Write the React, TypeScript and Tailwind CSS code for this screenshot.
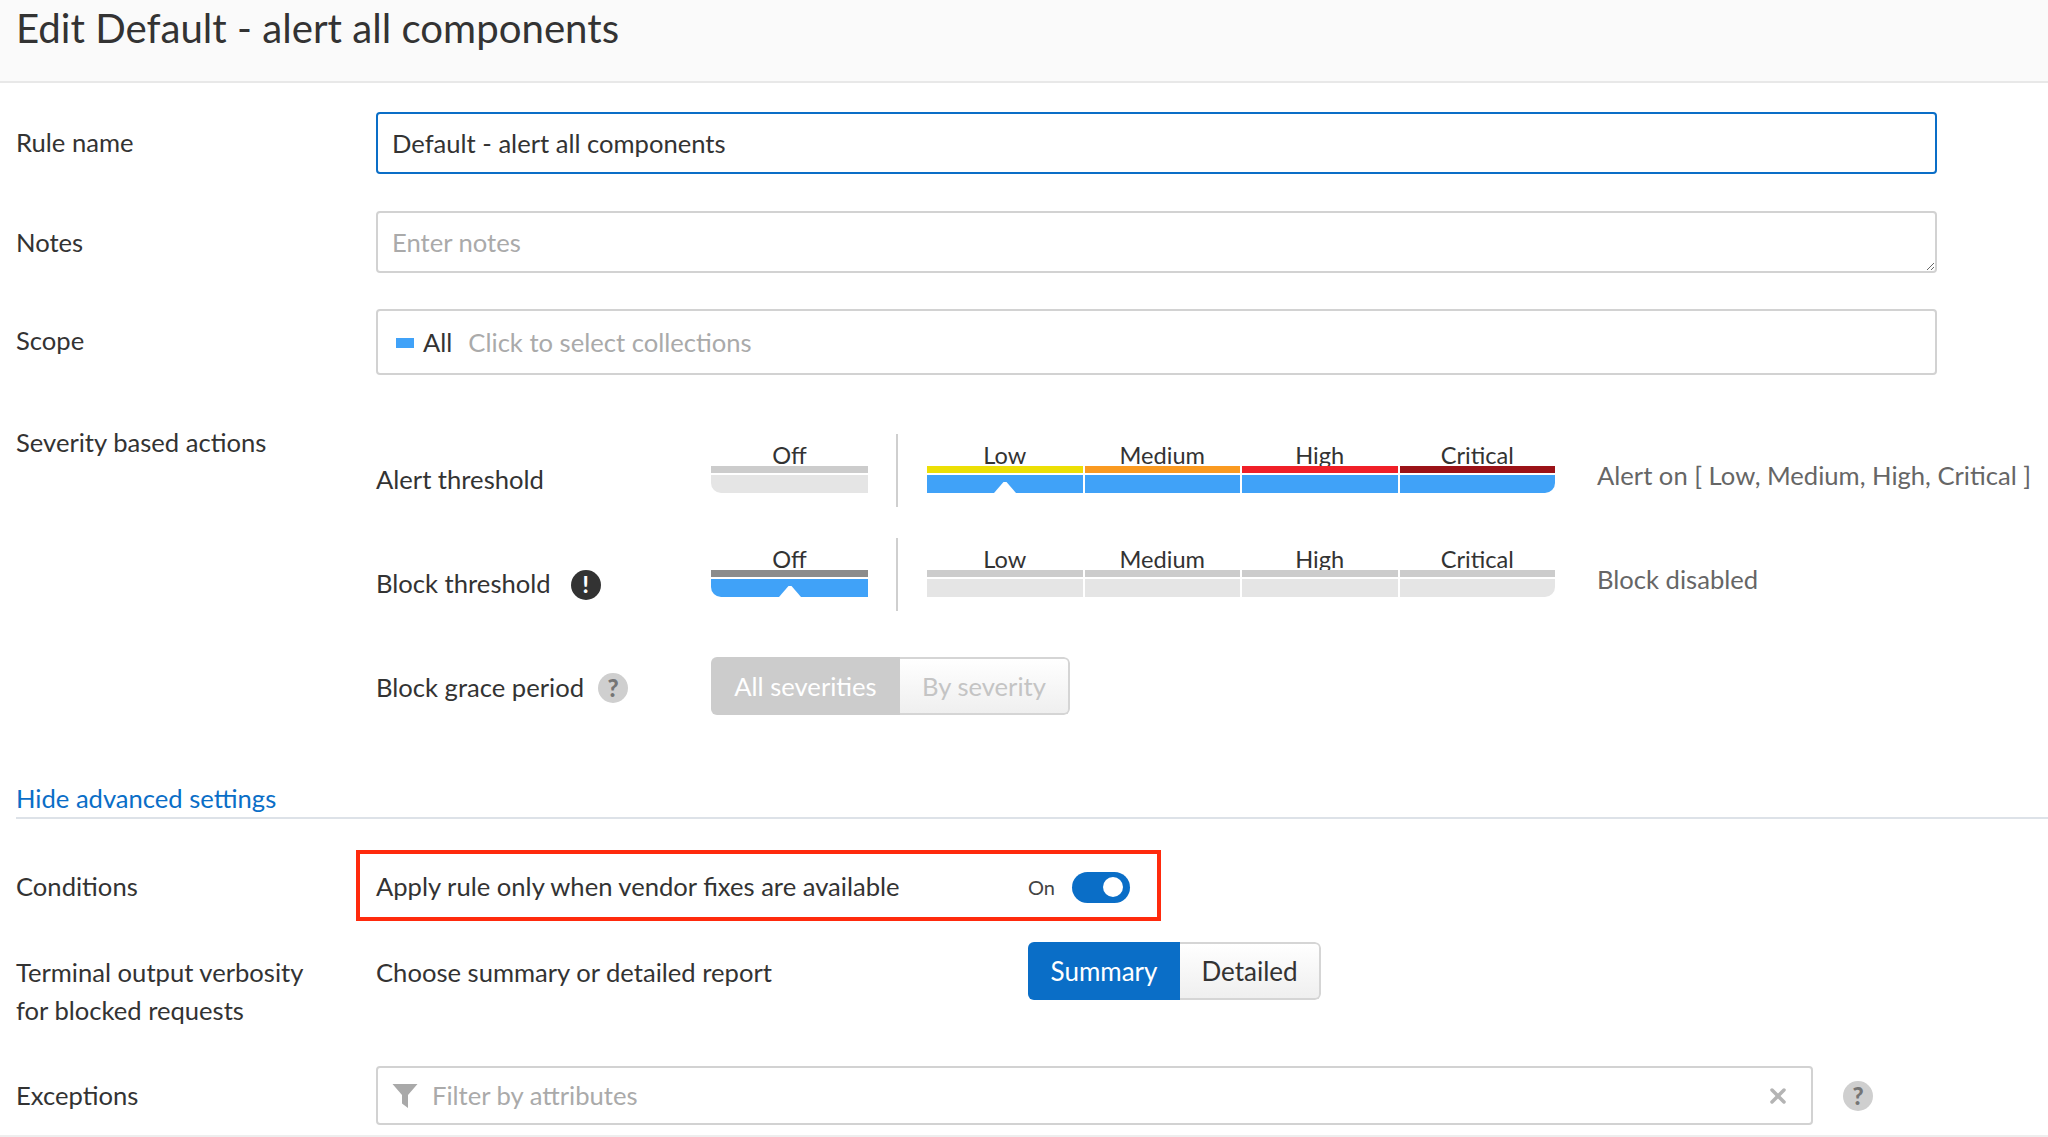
import { X } from "lucide-react";

const levels = [
  { name: "Low", color: "bg-[#ecdf05]" },
  { name: "Medium", color: "bg-[#fa9a21]" },
  { name: "High", color: "bg-[#f01f28]" },
  { name: "Critical", color: "bg-[#9b1218]" },
];

const Notch = () => (
  <svg width="24" height="17" viewBox="0 0 24 17" className="absolute bottom-0 left-1/2 -translate-x-1/2">
    <path d="M10.5 6 H13.5 L23 17 H1 Z" fill="#fff" />
  </svg>
);

const Help = ({ className }: { className: string }) => (
  <span className={`flex h-[30px] w-[30px] shrink-0 items-center justify-center rounded-full bg-[#cfcfcf] text-[24px] font-black text-[#757575] ${className}`}>
    ?
  </span>
);

type SegmentProps = {
  label: string;
  top: string;
  bottom: string;
  notch?: boolean;
  corner?: string;
};

const Segment = ({ label, top, bottom, notch, corner = "" }: SegmentProps) => (
  <div className="flex flex-col">
    <div className="flex h-[32px] items-end justify-center text-[23.6px] leading-[22px] text-[#333]">{label}</div>
    <div className={`h-[7px] ${top}`} />
    <div className={`relative mt-[2px] h-[18px] ${bottom} ${corner}`}>{notch && <Notch />}</div>
  </div>
);

const Threshold = ({ label, icon, off, on, status }: { label: string; icon?: boolean; off: boolean; on: boolean; status: string }) => (
  <div className="flex h-[73px]">
    <div className="flex w-[335px] items-center pt-[17px] text-[#333]">
      {label}
      {icon && (
        <span className="ml-[20px] mt-[3px] flex h-[30px] w-[30px] items-center justify-center rounded-full bg-[#333] text-[22px] font-black text-white">!</span>
      )}
    </div>
    <div className="w-[157px]">
      <Segment
        label="Off"
        top={off ? "bg-[#8c8c8c]" : "bg-[#cccccc]"}
        bottom={off ? "bg-[#40a2f8]" : "bg-[#e5e5e5]"}
        corner="rounded-bl-[10px]"
        notch={off}
      />
    </div>
    <div className="ml-[28px] mr-[29px] w-[2px] bg-[#cfcfcf]" />
    <div className="grid w-[628px] grid-cols-4 gap-[2px]">
      {levels.map((l, i) => (
        <Segment
          key={l.name}
          label={l.name}
          top={on ? l.color : "bg-[#cccccc]"}
          bottom={on ? "bg-[#40a2f8]" : "bg-[#e5e5e5]"}
          corner={i === 3 ? "rounded-br-[10px]" : ""}
          notch={on && i === 0}
        />
      ))}
    </div>
    <div className="ml-[42px] flex h-[82px] items-center whitespace-nowrap text-[#666]">{status}</div>
  </div>
);

export default function App() {
  return (
    <div className="h-[1137px] w-[2048px] overflow-hidden bg-white font-['Lato',sans-serif] text-[25.6px] text-[#333]">
      <div className="h-[83px] border-b-2 border-[#e8e8e8] bg-[#fafafa] pl-[16px] pt-[4px] text-[40.2px] leading-[48px]">
        Edit Default - alert all components
      </div>

      <div className="mt-[29px] flex items-center pl-[16px]">
        <div className="w-[360px] pb-[1px]">Rule name</div>
        <input
          readOnly
          value="Default - alert all components"
          className="h-[62px] w-[1561px] rounded-[4px] border-2 border-[#0a6ec7] px-[14px] text-[25.6px] text-[#333] outline-none"
        />
      </div>

      <div className="mt-[37px] flex items-center pl-[16px]">
        <div className="w-[360px]">Notes</div>
        <textarea
          placeholder="Enter notes"
          className="block h-[62px] w-[1561px] resize-y rounded-[4px] border-2 border-[#d2d2d2] px-[14px] pb-[9px] pt-[11px] text-[25.6px] leading-[36px] outline-none placeholder:text-[#aaa]"
        />
      </div>

      <div className="mt-[36px] flex items-center pl-[16px]">
        <div className="w-[360px] pb-[4px]">Scope</div>
        <div className="flex h-[66px] w-[1561px] items-center rounded-[4px] border-2 border-[#d2d2d2] pl-[18px] pt-[1px]">
          <span className="h-[10px] w-[18px] bg-[#40a2f8]" />
          <span className="ml-[9px]">All</span>
          <span className="ml-[16px] text-[#aaa]">Click to select collections</span>
        </div>
      </div>

      <div className="mt-[49px] flex pl-[16px]">
        <div className="w-[360px] leading-[36px]">Severity based actions</div>
        <div className="pt-[10px]">
          <Threshold label="Alert threshold" off={false} on status="Alert on [ Low, Medium, High, Critical ]" />
          <div className="h-[31px]" />
          <Threshold label="Block threshold" icon off on={false} status="Block disabled" />
          <div className="mt-[46px] flex h-[58px] items-center">
            <div className="flex w-[335px] items-center pt-[2px]">
              Block grace period
              <Help className="ml-[14px] mt-[2px]" />
            </div>
            <div className="flex h-[58px] w-[359px] overflow-hidden rounded-[6px]">
              <div className="flex w-[189px] items-center justify-center bg-[#cccccc] text-white">All severities</div>
              <div className="flex flex-1 items-center justify-center rounded-r-[6px] border-2 border-l-0 border-[#d5d5d5] bg-linear-to-b from-white to-[#efefef] text-[#c4c4c4]">
                By severity
              </div>
            </div>
          </div>
        </div>
      </div>

      <div className="ml-[16px] mt-[66px] h-[38px] border-b-2 border-[#dde2e8] leading-[34px] text-[#0a6ec7]">Hide advanced settings</div>

      <div className="mt-[31px] flex items-center pl-[16px]">
        <div className="w-[340px] pt-[2px]">Conditions</div>
        <div className="flex h-[71px] w-[805px] items-center border-4 border-[#ff2a0d] pl-[16px] pt-[2px]">
          <div className="w-[652px]">Apply rule only when vendor fixes are available</div>
          <span className="w-[44px] text-[20px] text-[#444]">On</span>
          <span className="mt-[1px] flex h-[31px] w-[58px] items-center justify-end rounded-full bg-[#0a6ec7] pr-[7px]">
            <span className="h-[20px] w-[20px] rounded-full bg-white" />
          </span>
        </div>
      </div>

      <div className="mt-[21px] flex h-[88px] pl-[16px]">
        <div className="w-[360px] pt-[11px] leading-[38px]">
          Terminal output verbosity
          <br />
          for blocked requests
        </div>
        <div className="w-[652px] pt-[11px] leading-[38px]">Choose summary or detailed report</div>
        <div className="flex h-[58px] w-[293px] overflow-hidden rounded-[6px] text-[26px]">
          <div className="flex w-[152px] items-center justify-center bg-[#0a6ec7] text-white">Summary</div>
          <div className="flex flex-1 items-center justify-center rounded-r-[6px] border-2 border-l-0 border-[#d5d5d5] bg-linear-to-b from-white to-[#efefef]">
            Detailed
          </div>
        </div>
      </div>

      <div className="mt-[36px] flex items-center pl-[16px]">
        <div className="w-[360px]">Exceptions</div>
        <div className="flex h-[59px] w-[1437px] items-center rounded-[4px] border-2 border-[#d2d2d2] pl-[14px] pr-[21px]">
          <svg width="26" height="24" viewBox="0 0 26 24" className="shrink-0">
            <path d="M0.5 0 H25.5 L16 11 V24 L10 19.5 V11 Z" fill="#a9a9a9" />
          </svg>
          <span className="ml-[14px] flex-1 text-[#aaa]">Filter by attributes</span>
          <X size={24} strokeWidth={3.5} className="text-[#b4b4b4]" />
        </div>
        <Help className="ml-[30px]" />
      </div>

      <div className="mt-[10px] h-[2px] bg-[#eeeeee]" />
    </div>
  );
}
